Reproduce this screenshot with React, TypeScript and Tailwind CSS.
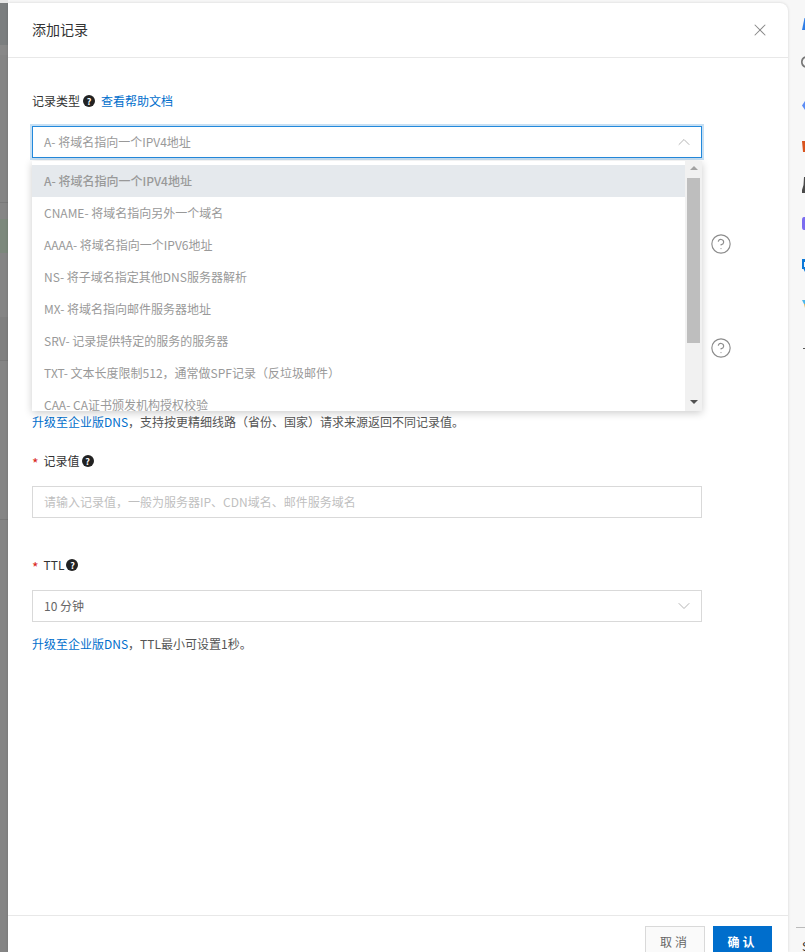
import React from 'react';
import { ChevronDown, ChevronUp, CircleHelp, X } from 'lucide-react';

const font = 'font-["Noto_Sans_CJK_SC","Liberation_Sans",sans-serif]';

const options = [
  'A- 将域名指向一个IPV4地址',
  'CNAME- 将域名指向另外一个域名',
  'AAAA- 将域名指向一个IPV6地址',
  'NS- 将子域名指定其他DNS服务器解析',
  'MX- 将域名指向邮件服务器地址',
  'SRV- 记录提供特定的服务的服务器',
  'TXT- 文本长度限制512，通常做SPF记录（反垃圾邮件）',
  'CAA- CA证书颁发机构授权校验',
];

const HelpDot = () => (
  <span className="flex h-[12px] w-[12px] items-center justify-center rounded-full bg-[#222222] text-[9px] font-bold leading-none text-white">
    ?
  </span>
);

const Required = () => <span className="mr-[5px] pt-[4px] text-sm leading-none text-[#d9281e]">*</span>;

const Dropdown = () => (
  <div className="absolute left-[32px] top-[161px] z-10 flex h-[250px] w-[670px] overflow-hidden bg-white shadow-[0_2px_8px_rgba(0,0,0,0.2)]">
    <ul className="min-w-0 flex-1 pt-[4px]">
      {options.map((option, index) => (
        <li
          key={option}
          className={
            index === 0
              ? 'flex h-[32px] items-center whitespace-nowrap bg-[#e5e9ed] px-3 text-xs font-medium text-[#999999]'
              : 'flex h-[32px] items-center whitespace-nowrap px-3 text-xs text-[#999999]'
          }
        >
          {option}
        </li>
      ))}
    </ul>
    <div className="flex w-[17px] flex-col items-center bg-[#f1f1f1]">
      <span className="mt-[5px] h-0 w-0 border-x-[4px] border-b-[4px] border-x-transparent border-b-[#a3a3a3]" />
      <div className="mt-[8px] h-[165px] w-[13px] bg-[#bebebe]" />
      <span className="mt-auto mb-[7px] h-0 w-0 border-x-[4px] border-t-[4px] border-x-transparent border-t-[#505050]" />
    </div>
  </div>
);

// dimmed page behind the drawer, only a sliver of it is visible
const LeftStrip = () => (
  <div className="flex w-[8px] shrink-0 flex-col bg-[#858585]">
    <div className="h-[3px] bg-[#e6e6e6]" />
    <div className="h-[42px] bg-[#7b7e7f]" />
    <div className="h-[10px] bg-[#888888]" />
    <div className="h-[148px] border-b border-[#797979]" />
    <div className="mt-[16px] h-[34px] bg-[#7c887c]" />
    <div className="mt-[64px] h-[44px] border-b border-[#797979] bg-[#808080]" />
    <div className="mt-[158px] h-px bg-[#797979]" />
  </div>
);

// app icons of the page behind, cut off by the window edge
const RightIcons = () => (
  <svg className="absolute left-[800px] top-0 h-[352px] w-[5px]" viewBox="0 0 5 352">
    <path d="M4.5 18 L5 18 L5 30 L2 30 Z" fill="#2f7ee6" />
    <path d="M5 57 A5.5 5.5 0 0 0 5 67" fill="none" stroke="#777777" strokeWidth="1.6" />
    <path d="M5 101 L2 105.5 L5 110 Z" fill="#5b8cf5" />
    <path d="M2 141 H5 V152 H3 Z" fill="#d9531e" />
    <path d="M4 177 H5 V193 H2 V190 L3.5 185 Z" fill="#4a4a4a" />
    <path d="M5 217 H4 Q2 217 2 220 V227 Q2 230 4 230 H5 Z" fill="#7b6cf0" />
    <path d="M2 259 H5 V262 H4 V267 H5 V272 L3.5 269 H2 Z" fill="#0a78d8" />
    <path d="M2 300 H5 V304 L4 304 Z" fill="#4db6e8" />
    <path d="M4 304 H5 V308 Z" fill="#e8b04d" />
    <path d="M3 348.5 H5" stroke="#555555" strokeWidth="1" />
  </svg>
);

export default function App() {
  return (
    <div className={`${font} relative flex h-[952px] w-[805px] overflow-hidden bg-[#f7f7f7]`}>
      <LeftStrip />

      <div className="relative mt-[3px] flex w-[780px] shrink-0 flex-col rounded-tr-lg bg-white shadow-[0_0_3px_rgba(0,0,0,0.15)]">
        <header className="flex h-[55px] shrink-0 items-center justify-between border-b border-[#e8e8e8] pl-[24px] pr-[18px]">
          <h2 className="pb-[2px] text-sm font-normal text-[#333333]">添加记录</h2>
          <X className="h-[20px] w-[20px] text-[#888888]" strokeWidth={1.25} />
        </header>

        <div className="flex-1 px-[24px]">
          <div className="mt-[34px] flex h-[18px] items-center text-xs text-[#333333]">
            <span>记录类型</span>
            <span className="ml-[3px]"><HelpDot /></span>
            <a className="ml-[6px] text-[#006ecc]">查看帮助文档</a>
          </div>

          <div className="mt-[16px] flex h-[32px] w-[670px] items-center justify-between border border-[#2389dc] pl-[11px] pr-[7px] shadow-[0_0_0_2px_#c7e0f4]">
            <span className="text-xs text-[#999999]">A- 将域名指向一个IPV4地址</span>
            <ChevronUp className="h-[20px] w-[20px] text-[#b5b5b5]" strokeWidth={1.2} />
          </div>

          <div className="mt-[255px] flex h-[18px] items-center text-xs text-[#555555]">
            <a className="text-[#006ecc]">升级至企业版DNS</a>
            <span>，支持按更精细线路（省份、国家）请求来源返回不同记录值。</span>
          </div>

          <div className="mt-[21px] flex h-[18px] items-center text-xs text-[#333333]">
            <Required />
            <span>记录值</span>
            <span className="ml-[2px]"><HelpDot /></span>
          </div>

          <div className="mt-[16px] flex h-[32px] w-[670px] items-center border border-[#d9d9d9] px-[11px] text-xs text-[#bfbfbf]">
            请输入记录值，一般为服务器IP、CDN域名、邮件服务域名
          </div>

          <div className="mt-[38px] flex h-[18px] items-center text-xs text-[#333333]">
            <Required />
            <span>TTL</span>
            <span className="ml-[2px]"><HelpDot /></span>
          </div>

          <div className="mt-[16px] flex h-[32px] w-[670px] items-center justify-between border border-[#d9d9d9] pl-[11px] pr-[7px]">
            <span className="text-xs text-[#666666]">10 分钟</span>
            <ChevronDown className="h-[20px] w-[20px] text-[#b5b5b5]" strokeWidth={1.2} />
          </div>

          <div className="mt-[13px] flex h-[18px] items-center text-xs text-[#555555]">
            <a className="text-[#006ecc]">升级至企业版DNS</a>
            <span>，TTL最小可设置1秒。</span>
          </div>
        </div>

        <footer className="flex h-[37px] shrink-0 justify-end gap-[8px] border-t border-[#e8e8e8] pr-[16px] pt-[10px]">
          <button className="h-[32px] w-[60px] border border-[#d9d9d9] bg-[#fafafa] text-xs tracking-[3px] text-[#666666]">取消</button>
          <button className="h-[32px] w-[59px] bg-[#006ecc] text-xs font-bold tracking-[3px] text-white">确认</button>
        </footer>

        <CircleHelp className="absolute left-[702px] top-[230px] h-[22px] w-[22px] text-[#8c8c8c]" strokeWidth={1.25} />
        <CircleHelp className="absolute left-[702px] top-[334px] h-[22px] w-[22px] text-[#8c8c8c]" strokeWidth={1.25} />
      </div>

      <Dropdown />
      <RightIcons />
      <div className="absolute left-[796px] top-[927px] h-px w-[9px] bg-[#bbbbbb]" />
      <span className="absolute left-[802px] top-[940px] text-xs leading-none text-[#333333]">S</span>
    </div>
  );
}
